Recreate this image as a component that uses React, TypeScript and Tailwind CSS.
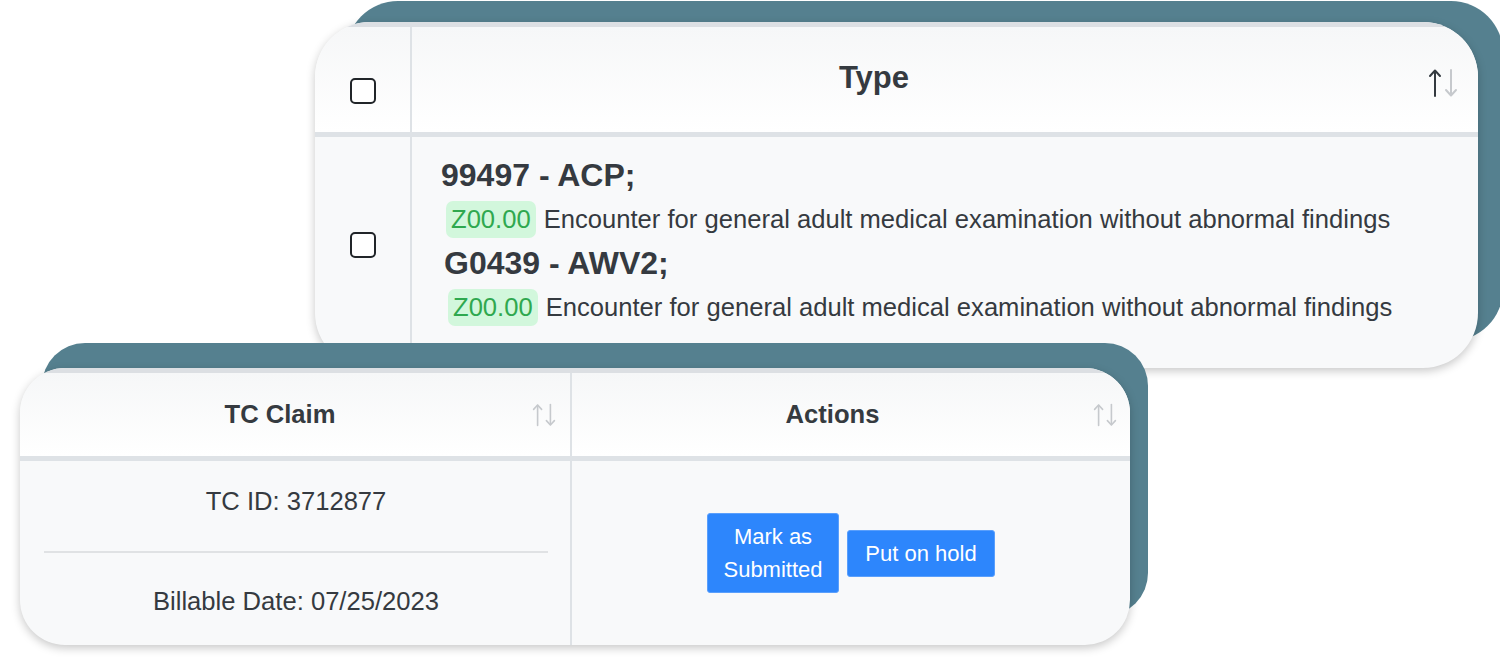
import React from 'react';

const font = { fontFamily: '"Liberation Sans", Arial, sans-serif' };

const SortIcon: React.FC<{ active?: boolean; size?: number }> = ({ active, size = 30 }) => (
  <svg width={size} height={size} viewBox="0 0 30 30" fill="none" strokeWidth="2" strokeLinecap="round" strokeLinejoin="round">
    <g stroke={active ? '#343a40' : '#c6c9cd'}>
      <path d="M7 28V3" />
      <path d="M2 8l5-5.5L12 8" />
    </g>
    <g stroke="#c6c9cd">
      <path d="M23 2v25" />
      <path d="M18 22l5 5.5 5-5.5" />
    </g>
  </svg>
);

const Checkbox: React.FC = () => (
  <div className="w-[26px] h-[26px] rounded-[5px] border-2 border-[#212529] bg-white" />
);

const Code: React.FC<{ children: React.ReactNode }> = ({ children }) => (
  <span className="inline-flex items-center h-[37px] px-[5px] rounded-[7px] bg-[#d2f7dc] text-[#2fa84f]">{children}</span>
);

const DiagnosisRow: React.FC<{ title: string; indent?: boolean }> = ({ title, indent }) => (
  <>
    <div className={`h-[44px] flex items-center text-[32px] font-bold text-[#353a40] ${indent ? 'ml-[3px]' : ''}`}>{title}</div>
    <div className={`h-[44px] flex items-center text-[25.6px] text-[#353a40] ${indent ? 'ml-[7px]' : 'ml-[5px]'}`}>
      <Code>Z00.00</Code>
      <span className="ml-[8px]">Encounter for general adult medical examination without abnormal findings</span>
    </div>
  </>
);

export default function App() {
  return (
    <div className="w-[1500px] h-[665px] bg-white overflow-hidden pt-[22px]" style={font}>
      {/* Type card */}
      <div className="ml-[315px] w-[1163px] h-[346px] rounded-[55px] overflow-hidden bg-[#f8f9fa] flex flex-col shadow-[0_3px_10px_rgba(0,0,0,0.22),28px_-24px_0_-3px_#55808f]">
        <div className="h-[5px] bg-[#dcdfe3]" />
        <div className="h-[105px] flex bg-gradient-to-b from-[#f6f7f8] to-white">
          <div className="w-[95px] flex justify-center pt-[51px]">
            <Checkbox />
          </div>
          <div className="w-[2px] bg-[#dee2e6]" />
          <div className="flex-1 flex items-start pr-[20px]">
            <div className="w-[924px] text-center pt-[33px] text-[31px] leading-[36px] font-bold text-[#353a40]">Type</div>
            <div className="ml-auto mt-[41px]">
              <SortIcon active />
            </div>
          </div>
        </div>
        <div className="h-[5px] bg-[#dee2e6]" />
        <div className="flex-1 flex">
          <div className="w-[95px] flex justify-center pt-[95px]">
            <Checkbox />
          </div>
          <div className="w-[2px] bg-[#dee2e6]" />
          <div className="flex-1 pl-[29px] pt-[16px]">
            <DiagnosisRow title="99497 - ACP;" />
            <DiagnosisRow title="G0439 - AWV2;" indent />
          </div>
        </div>
      </div>

      {/* Claim card */}
      <div className="relative z-10 ml-[20px] w-[1110px] h-[277px] rounded-[45px] overflow-hidden bg-[#f8f9fa] flex flex-col shadow-[0_3px_10px_rgba(0,0,0,0.22),20px_-27px_0_-2px_#55808f]">
        <div className="h-[5px] bg-[#dcdfe3]" />
        <div className="h-[83px] flex bg-gradient-to-b from-[#f6f7f8] to-white text-[25.6px] font-bold text-[#353a40]">
          <div className="w-[550px] flex items-center pl-[8px] pr-[14px]">
            <div className="flex-1 text-center">TC Claim</div>
            <SortIcon size={24} />
          </div>
          <div className="w-[2px] bg-[#dee2e6]" />
          <div className="flex-1 flex items-center pr-[13px]">
            <div className="flex-1 text-center">Actions</div>
            <SortIcon size={24} />
          </div>
        </div>
        <div className="h-[5px] bg-[#dee2e6]" />
        <div className="flex-1 flex text-[25.6px] text-[#353a40]">
          <div className="w-[550px] pt-[24px] pl-[24px] pr-[22px] text-center">
            <div className="leading-[32px]">TC ID: 3712877</div>
            <div className="mt-[34px] h-[2px] bg-[#e0e2e4]" />
            <div className="mt-[32px] leading-[32px]">Billable Date: 07/25/2023</div>
          </div>
          <div className="w-[2px] bg-[#dee2e6]" />
          <div className="flex-1 flex items-center justify-center gap-[8px] text-[22px] leading-[33px] text-white">
            <button className="w-[132px] py-[6px] rounded-[3px] bg-[#2d86fc] border border-[#5a9ffc]">Mark as Submitted</button>
            <button className="w-[148px] py-[6px] rounded-[3px] bg-[#2d86fc] border border-[#5a9ffc]">Put on hold</button>
          </div>
        </div>
      </div>
    </div>
  );
}
